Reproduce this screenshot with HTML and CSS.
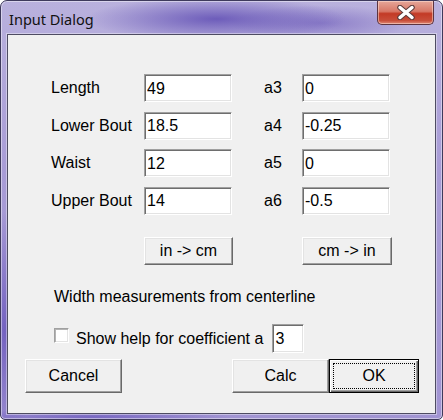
FILE: index.html
```html
<!DOCTYPE html>
<html lang="en">
  <head>
    <meta charset="UTF-8" />
    <title>Input Dialog</title>
    <link rel="stylesheet" href="styles.css">
  </head>
  <body>
    <div class="window">
      <div class="titlebar">
        <span class="title">Input Dialog</span>
        <button class="close-button">
          <svg width="22" height="15" viewBox="0 0 22 15">
            <path d="M5 2.5 L17 12.5 M17 2.5 L5 12.5" stroke="#5a3a3a" stroke-width="5.5" stroke-linecap="round"/>
            <path d="M5 2.5 L17 12.5 M17 2.5 L5 12.5" stroke="#ffffff" stroke-width="3.5" stroke-linecap="round"/>
          </svg>
        </button>
      </div>
      <div class="client">
        <div class="form-grid">
          <label class="label">Length</label>
          <input class="field" value="49" />
          <label class="label coef">a3</label>
          <input class="field" value="0" />

          <label class="label">Lower Bout</label>
          <input class="field" value="18.5" />
          <label class="label coef">a4</label>
          <input class="field" value="-0.25" />

          <label class="label">Waist</label>
          <input class="field" value="12" />
          <label class="label coef">a5</label>
          <input class="field" value="0" />

          <label class="label">Upper Bout</label>
          <input class="field" value="14" />
          <label class="label coef">a6</label>
          <input class="field" value="-0.5" />

          <button class="button convert in-cm">in -&gt; cm</button>
          <button class="button convert cm-in">cm -&gt; in</button>
        </div>

        <p class="note">Width measurements from centerline</p>

        <div class="help-row">
          <span class="checkbox"></span>
          <span class="help-text">Show help for coefficient a</span>
          <input class="field small" value="3" />
        </div>

        <div class="footer">
          <button class="button wide">Cancel</button>
          <span class="spacer"></span>
          <button class="button wide">Calc</button>
          <button class="button default"><span class="focus">OK</span></button>
        </div>
      </div>
    </div>
  </body>
</html>
```

FILE: styles.css
```css
body {
  margin: 0;
  background-color: #ffffff;
  font-family: "Liberation Sans", Arial, sans-serif;
}
.window {
  width: 443px;
  height: 420px;
  box-sizing: border-box;
  border: 1px solid #3e3a5c;
  border-radius: 7px 7px 5px 5px;
  padding: 0 6px 5px 6px;
  display: flex;
  flex-direction: column;
  background:
    radial-gradient(ellipse 130px 22px at 215px 18px, rgba(96, 78, 180, 0.85), rgba(96, 78, 180, 0)),
    radial-gradient(ellipse 90px 18px at 320px 22px, rgba(110, 92, 186, 0.6), rgba(110, 92, 186, 0)),
    radial-gradient(ellipse 30px 120px at 4px 330px, rgba(110, 92, 190, 0.9), rgba(110, 92, 190, 0)),
    radial-gradient(ellipse 140px 8px at 90px 416px, rgba(110, 92, 190, 0.8), rgba(110, 92, 190, 0)),
    linear-gradient(#b9b1dd, #a89cd6 40%, #a194d2);
  box-shadow: inset 0 0 0 1px rgba(255, 255, 255, 0.45);
}
.titlebar {
  height: 33px;
  display: flex;
  justify-content: space-between;
  align-items: flex-start;
}
.title {
  margin: 8px 0 0 2px;
  font-family: "Noto Sans", sans-serif;
  font-size: 14.5px;
  color: #111;
}
.close-button {
  width: 57px;
  height: 24px;
  margin-right: 2px;
  padding: 0;
  border: 1px solid #5c3440;
  border-top: none;
  border-radius: 0 0 5px 5px;
  background: linear-gradient(#e6a699, #d77867 45%, #c33a26 55%, #c84e3a 85%, #e08a78);
  box-shadow: inset 0 0 0 1px rgba(255, 230, 220, 0.5);
  display: flex;
  align-items: center;
  justify-content: center;
}
.client {
  flex: 1;
  background-color: #f0f0f0;
  border: 1px solid #4e4c62;
  box-shadow: 0 0 0 1px rgba(255, 255, 255, 0.4);
  display: flex;
  flex-direction: column;
  font-size: 16px;
  color: #000;
}
.form-grid {
  display: grid;
  grid-template-columns: 93px 88px 70px 89px;
  grid-template-rows: repeat(4, 28px) auto;
  row-gap: 9.5px;
  margin: 39px 0 0 43px;
  align-items: start;
}
.label {
  line-height: 28px;
}
.coef {
  padding-left: 32px;
}
.field {
  box-sizing: border-box;
  width: 88px;
  height: 28px;
  margin: 0;
  padding: 1px 0 0 2px;
  font-family: "Liberation Sans", Arial, sans-serif;
  font-size: 16px;
  color: #000;
  background-color: #fff;
  border: 1px solid;
  border-color: #a0a0a0 #ffffff #ffffff #a0a0a0;
  box-shadow: inset 1px 1px #6e6e6e, inset -1px -1px #e3e3e3;
  outline: none;
}
.field.small {
  width: 32px;
  height: 29px;
}
.button {
  box-sizing: border-box;
  height: 28px;
  margin: 0;
  padding: 0;
  font-family: "Liberation Sans", Arial, sans-serif;
  font-size: 16px;
  color: #000;
  background-color: #f0f0f0;
  border: 1px solid;
  border-color: #ffffff #696969 #696969 #ffffff;
  box-shadow: inset -1px -1px #a0a0a0, inset 1px 1px #e3e3e3;
}
.convert {
  margin-top: 13px;
  width: 89px;
}
.in-cm {
  grid-column: 2;
}
.cm-in {
  grid-column: 4;
  width: 90px;
}
.note {
  margin: 23px 0 0 46px;
  line-height: 18px;
}
.help-row {
  display: flex;
  align-items: center;
  height: 29px;
  margin: 18px 0 0 46px;
}
.checkbox {
  box-sizing: border-box;
  width: 15px;
  height: 15px;
  margin-top: -6px;
  background-color: #fff;
  border: 1px solid;
  border-color: #a0a0a0 #ffffff #ffffff #a0a0a0;
  box-shadow: inset 1px 1px #b4b4b4, inset -1px -1px #e3e3e3;
}
.help-text {
  margin: 0 9px 0 7px;
}
.footer {
  display: flex;
  margin: 6px 16px 0 17px;
}
.footer .button {
  height: 34px;
}
.wide {
  width: 97px;
}
.footer .wide + .wide {
  width: 96px;
}
.spacer {
  flex: 1;
}
.default {
  width: 90px;
  border: 1px solid #000;
  box-shadow: inset 1px 1px #fff, inset -1px -1px #696969, inset -2px -2px #a0a0a0;
  padding: 3px;
}
.focus {
  display: flex;
  height: 100%;
  align-items: center;
  justify-content: center;
  box-sizing: border-box;
  border: 1px dotted #000;
}
```
